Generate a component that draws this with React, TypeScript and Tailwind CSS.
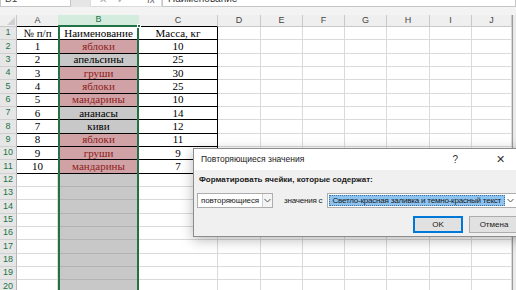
import React from "react";

type Fill = "pink" | "gray" | "white";

const data: [string, string, string, Fill][] = [
  ["1", "яблоки", "10", "pink"],
  ["2", "апельсины", "25", "gray"],
  ["3", "груши", "30", "pink"],
  ["4", "яблоки", "25", "pink"],
  ["5", "мандарины", "10", "pink"],
  ["6", "ананасы", "14", "gray"],
  ["7", "киви", "12", "gray"],
  ["8", "яблоки", "11", "pink"],
  ["9", "груши", "9", "pink"],
  ["10", "мандарины", "7", "pink"],
];

const rightCols = [
  { id: "D", w: "w-[43px]" },
  { id: "E", w: "w-[42px]" },
  { id: "F", w: "w-[42px]" },
  { id: "G", w: "w-[42px]" },
  { id: "H", w: "w-[43px]" },
  { id: "I", w: "w-[42px]" },
  { id: "J", w: "w-[40px]" },
];

const serif = "font-['Liberation_Serif','Times_New_Roman',serif]";
const ui = "font-['Liberation_Sans',Arial,sans-serif]";

function RowHeader({ n }: { n: number }) {
  return (
    <div className={`w-[17px] shrink-0 flex items-center justify-center bg-[#e6e6e6] border-r border-b border-r-[#b5b5b5] border-b-[#d0d0d0] text-[9px] text-[#217346] ${ui}`}>
      {n}
    </div>
  );
}

function EmptyRight() {
  return (
    <>
      {rightCols.map((c) => (
        <div key={c.id} className={`${c.w} shrink-0 bg-white border-r border-b border-[#dadada]`} />
      ))}
      <div className="w-[4px] shrink-0 bg-[#e9e9e9] border-l border-[#9a9a9a]" />
    </>
  );
}

function DataRow({ n, a, b, c, fill }: { n: number; a: string; b: string; c: string; fill: Fill }) {
  const bFill =
    fill === "pink"
      ? "bg-[#d1a2a5] text-[#8c1c1c]"
      : fill === "gray"
      ? "bg-[#c8c8c8] text-black"
      : "bg-white text-black";
  return (
    <div className="flex h-[13.33px]">
      <RowHeader n={n} />
      <div className={`w-[41px] shrink-0 flex items-center justify-center bg-white border-b border-black text-[11px] leading-none text-black ${serif}`}>
        {a}
      </div>
      <div className="w-[81px] shrink-0 border-x-2 border-[#217346] bg-[#c6c6c6]">
        <div className={`h-full flex items-center justify-center border-b border-black text-[11px] leading-none ${bFill} ${serif}`}>
          {b}
        </div>
      </div>
      <div className={`w-[79px] shrink-0 flex items-center justify-center bg-white border-r border-b border-black text-[11px] leading-none text-black ${serif}`}>
        {c}
      </div>
      <EmptyRight />
    </div>
  );
}

function BlankRow({ n }: { n: number }) {
  return (
    <div className="flex h-[13.33px]">
      <RowHeader n={n} />
      <div className="w-[41px] shrink-0 bg-white border-r border-b border-[#dadada]" />
      <div className="w-[81px] shrink-0 border-x-2 border-[#217346] bg-[#c8c8c8]">
        <div className="h-full border-b border-[#b3b3b3]" />
      </div>
      <div className="w-[79px] shrink-0 bg-white border-r border-b border-[#dadada]" />
      <EmptyRight />
    </div>
  );
}

function Chevron() {
  return (
    <svg width="7" height="5" viewBox="0 0 7 5">
      <path d="M0.5 1 L3.5 4 L6.5 1" fill="none" stroke="#555" strokeWidth="1" />
    </svg>
  );
}

function Dialog() {
  return (
    <div className={`absolute left-[193px] top-[148px] w-[340px] h-[89px] bg-[#f0f0f0] border border-[#8c8c8c] shadow-[0_3px_12px_rgba(0,0,0,0.28)] ${ui} text-[8px] text-[#1a1a1a]`}>
      <div className="h-[21px] bg-white flex items-center pl-[7px]">
        <span className="text-[8.5px]">Повторяющиеся значения</span>
        <span className="ml-auto mr-[38px] text-[10px] text-[#333]">?</span>
        <span className="mr-[27px] text-[11px] text-[#333]">✕</span>
      </div>
      <div className="pl-[5px] pt-[4px] font-bold">Форматировать ячейки, которые содержат:</div>
      <div className="flex items-center mt-[7px] pl-[3px] h-[15px]">
        <div className="w-[76px] h-full flex items-center bg-white border border-[#adadad]">
          <span className="pl-[3px] tracking-[-0.1px]">повторяющиеся</span>
          <div className="ml-auto w-[10px] h-full flex items-center justify-center border-l border-[#d0d0d0] bg-[#f4f4f4]">
            <Chevron />
          </div>
        </div>
        <span className="ml-[11px] tracking-[-0.2px]">значения с</span>
        <div className="ml-[5px] w-[190px] h-full flex items-center bg-white border border-[#adadad] p-[1px]">
          <div className="h-full w-[177px] flex items-center bg-[#8cc3f0] border border-dotted border-[#3c6f9c] pl-[2px] whitespace-nowrap overflow-hidden tracking-[-0.2px]">
            Светло-красная заливка и темно-красный текст
          </div>
          <div className="ml-auto w-[10px] h-full flex items-center justify-center">
            <Chevron />
          </div>
        </div>
      </div>
      <div className="flex mt-[8px] pl-[219px] gap-[6px]">
        <div className="w-[50px] h-[17px] flex items-center justify-center bg-[#e1e1e1] border-2 border-[#0078d7]">OK</div>
        <div className="w-[50px] h-[17px] flex items-center justify-center bg-[#e1e1e1] border border-[#adadad]">Отмена</div>
      </div>
    </div>
  );
}

export default function App() {
  return (
    <div className="relative w-[516px] h-[290px] overflow-hidden bg-white">
      {/* formula bar, only its lower edge is visible */}
      <div className="h-[7px] overflow-hidden bg-[#e6e6e6]">
        <div className={`-mt-[9px] h-[16px] flex text-[10px] text-[#444] ${ui}`}>
          <div className="w-[71px] h-full bg-white border border-[#c6c6c6] pl-[4px] leading-[14px]">B1</div>
          <div className="w-[19px]" />
          <div className="w-[72px] h-full bg-white border border-[#dcdcdc] flex items-center gap-[10px] pl-[8px] text-[#aaa]">
            <span>✕</span><span>✓</span><span className="ml-auto mr-[6px] italic text-[#666]">fx</span>
          </div>
          <div className="flex-1 h-full bg-white border border-[#c6c6c6] pl-[5px] leading-[14px] text-[#333]">Наименование</div>
        </div>
      </div>
      <div className="h-[8px] bg-[#f3f3f3]" />
      {/* column headers */}
      <div className={`flex h-[12px] bg-[#efefef] text-[9px] text-[#444] ${ui}`}>
        <div className="w-[17px] shrink-0 border-r border-b border-[#c8c8c8] flex items-end justify-end">
          <div className="w-0 h-0 border-l-[8px] border-l-transparent border-b-[8px] border-b-[#d0d0d0] mr-[1px] mb-[1px]" />
        </div>
        <div className="w-[41px] shrink-0 flex items-center justify-center border-b border-black">A</div>
        <div className="relative w-[81px] shrink-0 flex items-center justify-center bg-[#d3ecdd] text-[#217346] border-b-2 border-[#217346]">
          B
          <div className="absolute right-[-2px] bottom-[-3px] w-[4px] h-[4px] bg-[#217346] border border-white" />
        </div>
        <div className="w-[79px] shrink-0 flex items-center justify-center border-b border-black border-r border-r-[#c8c8c8]">C</div>
        {rightCols.map((c) => (
          <div key={c.id} className={`${c.w} shrink-0 flex items-center justify-center border-r border-b border-[#c8c8c8]`}>
            {c.id}
          </div>
        ))}
        <div className="w-[4px] shrink-0 bg-[#e9e9e9] border-l border-[#9a9a9a]" />
      </div>
      <div className="flex h-[13.33px]">
        <RowHeader n={1} />
        <div className={`w-[41px] shrink-0 flex items-center justify-center bg-white border-b border-black text-[11px] leading-none ${serif}`}>№ п/п</div>
        <div className="w-[81px] shrink-0 border-x-2 border-[#217346] bg-white">
          <div className={`h-full flex items-center justify-center border-b border-black text-[11px] leading-none ${serif}`}>Наименование</div>
        </div>
        <div className={`w-[79px] shrink-0 flex items-center justify-center bg-white border-r border-b border-black text-[11px] leading-none ${serif}`}>Масса, кг</div>
        <EmptyRight />
      </div>
      {data.map((r, i) => (
        <DataRow key={i} n={i + 2} a={r[0]} b={r[1]} c={r[2]} fill={r[3]} />
      ))}
      {Array.from({ length: 9 }, (_, i) => (
        <BlankRow key={i} n={i + 12} />
      ))}
      <Dialog />
    </div>
  );
}
